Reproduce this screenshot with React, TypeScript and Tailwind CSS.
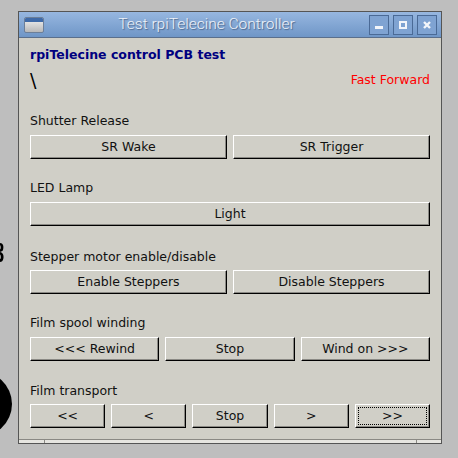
import React from "react";

const Btn = ({ label, focus = false }: { label: string; focus?: boolean }) => (
  <div className="relative flex h-[24px] flex-1 items-center justify-center border-t border-l border-r border-b border-t-white border-l-white border-r-black border-b-black bg-[#d0cfc7] shadow-[inset_-1px_-1px_0_#8a8984] text-[12.5px] text-[#111]">
    {focus && <div className="absolute inset-[2px] border border-dotted border-black" />}
    <span className="relative">{label}</span>
  </div>
);

const Label = ({ text }: { text: string }) => (
  <div className="h-[18px] leading-[18px] text-[12.5px] text-[#111]">{text}</div>
);

export default function App() {
  return (
    <div
      className="relative h-[458px] w-[458px] overflow-hidden bg-[#bebebe] pl-[18px] pt-[11px]"
      style={{ fontFamily: '"DejaVu Sans", sans-serif' }}
    >
      {/* desktop items peeking behind the window */}
      <svg className="absolute left-0 top-[240px]" width="6" height="24" viewBox="0 0 6 24">
        <path d="M0 3 C3 3 4 6 3 10 C2.5 11 1.5 11.5 0 12 C2 12.5 4 14 3.5 18 C3 21 1.5 22 0 22 L0 19 C1 19 1 17 0.5 15 L0 14.5 Z M0 5 L0 9.5 C1 9 1 6 0 5 Z" fill="#000" />
      </svg>
      <svg className="absolute left-0 top-[368px]" width="16" height="72" viewBox="0 0 16 72">
        <ellipse cx="-24" cy="36" rx="36" ry="34" fill="#000" />
      </svg>

      <div className="relative flex h-[433px] w-[424px] flex-col border border-[#555]">
        {/* title bar */}
        <div className="flex h-[26px] items-center border-b border-[#5a6f8c] bg-gradient-to-b from-[#97b7e0] to-[#6f96c7]">
          <div className="ml-[5px] h-[16px] w-[20px] shrink-0 overflow-hidden rounded-[2px] border border-[#6c7f99] bg-gradient-to-b from-[#f4f4f4] to-[#b8b8b8]">
            <div className="h-[4px] bg-[#3f6aa8]" />
          </div>
          <div
            className="flex h-[25px] flex-1 items-center justify-center text-[15.5px] font-light text-[#eef2f8] [text-shadow:1px_1px_1px_rgba(40,60,90,0.6)]"
            style={{ fontFamily: 'Roboto, sans-serif' }}
          >
            Test rpiTelecine Controller
          </div>
          <div className="mr-[4px] flex shrink-0 gap-[4px]">
            <div className="flex h-[20px] w-[20px] items-end justify-center border border-[#4a6a96] bg-[#7fa3d2] pb-[5px]">
              <div className="h-[3px] w-[8px] bg-[#f2f5fa]" />
            </div>
            <div className="flex h-[20px] w-[20px] items-center justify-center border border-[#4a6a96] bg-[#7fa3d2]">
              <div className="h-[8px] w-[8px] border-2 border-[#f2f5fa]" />
            </div>
            <div className="flex h-[20px] w-[20px] items-center justify-center border border-[#4a6a96] bg-[#7fa3d2]">
              <svg width="8" height="8" viewBox="0 0 8 8">
                <path d="M1 1 L7 7 M7 1 L1 7" stroke="#f2f5fa" strokeWidth="2.4" />
              </svg>
            </div>
          </div>
        </div>

        {/* body */}
        <div className="flex flex-1 flex-col bg-[#d0cfc7] px-[11px]">
          <div className="mt-[8px] h-[18px] leading-[18px] text-[12.5px] font-bold text-[#000080]">
            rpiTelecine control PCB test
          </div>
          <div className="mt-[5px] flex h-[22px] items-center justify-between">
            <span className="text-[19px] leading-[22px] text-black">\</span>
            <span className="text-[12.5px] text-[#ff0000]">Fast Forward</span>
          </div>

          <div className="mt-[21px]">
            <Label text="Shutter Release" />
          </div>
          <div className="mt-[5px] flex gap-[6px]">
            <Btn label="SR Wake" />
            <Btn label="SR Trigger" />
          </div>

          <div className="mt-[20px]">
            <Label text="LED Lamp" />
          </div>
          <div className="mt-[5px] flex gap-[6px]">
            <Btn label="Light" />
          </div>

          <div className="mt-[22px]">
            <Label text="Stepper motor enable/disable" />
          </div>
          <div className="mt-[4px] flex gap-[6px]">
            <Btn label="Enable Steppers" />
            <Btn label="Disable Steppers" />
          </div>

          <div className="mt-[20px]">
            <Label text="Film spool winding" />
          </div>
          <div className="mt-[5px] flex gap-[6px]">
            <Btn label="<<< Rewind" />
            <Btn label="Stop" />
            <Btn label="Wind on >>>" />
          </div>

          <div className="mt-[21px]">
            <Label text="Film transport" />
          </div>
          <div className="mt-[4px] flex gap-[6px]">
            <Btn label="<<" />
            <Btn label="<" />
            <Btn label="Stop" />
            <Btn label=">" />
            <Btn label=">>" focus />
          </div>
        </div>

        {/* status strip */}
        <div className="flex h-[4px] border-t border-[#8a8984] bg-[#e6e5e0]">
          <div className="w-[26px] border-r border-[#8a8984]" />
          <div className="flex-1" />
          <div className="w-[25px] border-l border-[#8a8984]" />
        </div>
      </div>
    </div>
  );
}
